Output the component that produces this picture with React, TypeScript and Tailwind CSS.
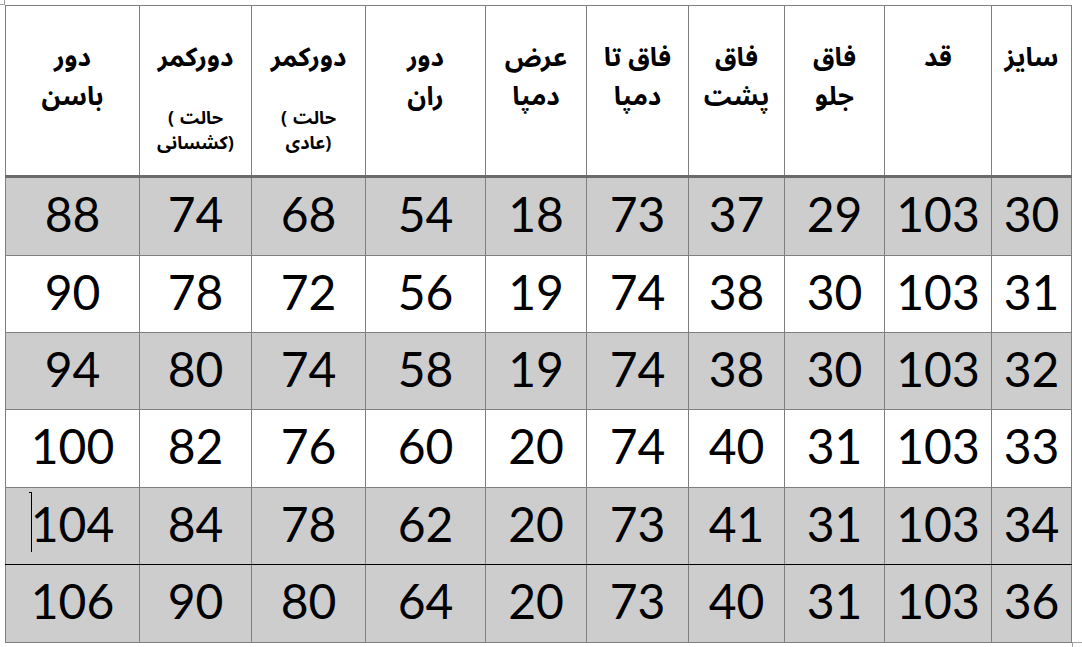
const cols = [134, 112, 114, 120, 101, 102, 96, 100, 107, 80];

type Head = { top: string; bottom?: string; note?: string };

const heads: Head[] = [
  { top: 'دور', bottom: 'باسن' },
  { top: 'دورکمر', note: 'کشسانی' },
  { top: 'دورکمر', note: 'عادی' },
  { top: 'دور', bottom: 'ران' },
  { top: 'عرض', bottom: 'دمپا' },
  { top: 'فاق تا', bottom: 'دمپا' },
  { top: 'فاق', bottom: 'پشت' },
  { top: 'فاق', bottom: 'جلو' },
  { top: 'قد' },
  { top: 'سایز' },
];

const rows = [
  { cells: [88, 74, 68, 54, 18, 73, 37, 29, 103, 30], shade: true, h: 'h-[79px]' },
  { cells: [90, 78, 72, 56, 19, 74, 38, 30, 103, 31], shade: false, h: 'h-[77px]' },
  { cells: [94, 80, 74, 58, 19, 74, 38, 30, 103, 32], shade: true, h: 'h-[77px]' },
  { cells: [100, 82, 76, 60, 20, 74, 40, 31, 103, 33], shade: false, h: 'h-[78px]' },
  { cells: [104, 84, 78, 62, 20, 73, 41, 31, 103, 34], shade: true, h: 'h-[77px]' },
  { cells: [106, 90, 80, 64, 20, 73, 40, 31, 103, 36], shade: true, h: 'h-[78px]' },
];

// "(حالت ...)" laid out ltr as in the source cell: "(" left of the first line, ")" right of the second
const Note = ({ word }: { word: string }) => (
  <div className="mt-[29px] flex flex-col items-center text-[18px] leading-[25px]">
    <div className="flex items-center gap-[6px]">
      <span>(</span>
      <span dir="rtl">حالت</span>
    </div>
    <div className="flex items-center">
      <span dir="rtl">{word}</span>
      <span>)</span>
    </div>
  </div>
);

export default function App() {
  return (
    <div className="relative w-[1082px] h-[647px] bg-white overflow-hidden">
      {/* corner marks */}
      <div className="absolute left-0 top-[4px] w-[5px] h-px bg-[#a0a0a0]" />
      <div className="absolute left-[4px] top-0 w-px h-[5px] bg-[#a0a0a0]" />
      <div className="absolute left-[1072px] top-[642px] w-[10px] h-px bg-[#a0a0a0]" />
      <div className="absolute left-[1072px] top-[642px] w-px h-[5px] bg-[#a0a0a0]" />

      <div className="pl-[5px] pt-[5px]">
        <table className="table-fixed border-collapse w-[1066px] text-black">
          <colgroup>
            {cols.map((w, i) => (
              <col key={i} style={{ width: w }} />
            ))}
          </colgroup>
          <thead>
            <tr className="h-[171px]">
              {heads.map((h, i) => (
                <th
                  key={i}
                  className="border border-[#7f7f7f] border-b-[3px] border-b-[#6a6a6a] align-top pt-[32px] font-bold text-center font-['Noto_Sans_Arabic','Liberation_Sans','DejaVu_Sans',sans-serif]"
                >
                  <div dir="rtl" className="text-[26px] leading-[39px]">{h.top}</div>
                  {h.bottom && (
                    <div dir="rtl" className="text-[26px] leading-[39px]">{h.bottom}</div>
                  )}
                  {h.note && <Note word={h.note} />}
                </th>
              ))}
            </tr>
          </thead>
          <tbody>
            {rows.map((r, ri) => (
              <tr
                key={ri}
                className={`${r.h} ${r.shade ? 'bg-[#cdcdcd]' : 'bg-white'}`}
              >
                {r.cells.map((c, ci) => (
                  <td
                    key={ci}
                    className={`border border-[#7f7f7f] ${ri === 4 ? 'border-b-black' : ''} text-center align-middle pb-[5px] text-[48px] leading-none font-['Lato',sans-serif]`}
                  >
                    {c}
                  </td>
                ))}
              </tr>
            ))}
          </tbody>
        </table>
      </div>

      {/* text cursor */}
      <div className="absolute left-[31px] top-[492px] w-px h-[60px] bg-black" />
      <div className="absolute left-[29px] top-[492px] w-[3px] h-px bg-black" />
    </div>
  );
}
